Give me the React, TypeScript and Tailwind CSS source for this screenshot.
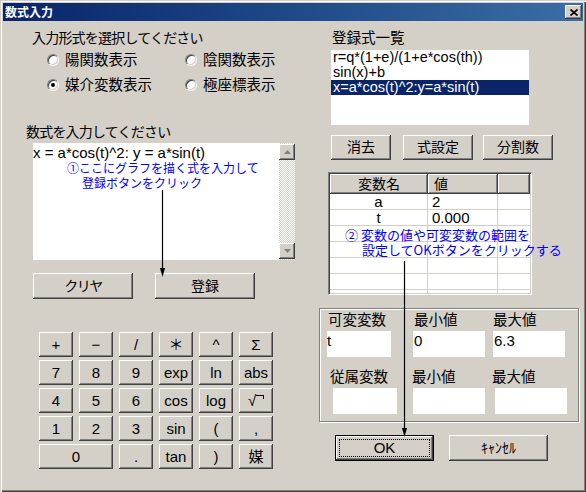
import type { ReactNode } from "react";

const RAISED =
  "bg-[#d4d0c8] shadow-[inset_-1px_-1px_0_#404040,inset_1px_1px_0_#ffffff,inset_-2px_-2px_0_#808080,inset_2px_2px_0_#d4d0c8]";

function Btn({ children, className = "" }: { children: ReactNode; className?: string }) {
  return (
    <div className={`flex items-center justify-center shrink-0 ${RAISED} ${className}`}>
      {children}
    </div>
  );
}

function Radio({ label, checked = false }: { label: string; checked?: boolean }) {
  return (
    <div className="flex items-center">
      <div className="w-[12px] h-[12px] rounded-full border border-t-[#808080] border-l-[#808080] border-r-white border-b-white">
        <div className="w-full h-full rounded-full bg-white shadow-[inset_1px_1px_0_#404040,inset_-1px_-1px_0_#d4d0c8] flex items-center justify-center">
          {checked && <div className="w-[4px] h-[4px] rounded-full bg-black" />}
        </div>
      </div>
      <span className="ml-[6px] text-[14.5px] leading-[16px]">{label}</span>
    </div>
  );
}

const KEYS: { k: ReactNode; wide?: boolean; cls?: string }[] = [
  { k: "+" }, { k: "−" }, { k: "/" }, { k: "＊", cls: "text-[12px]" }, { k: "^" }, { k: "Σ" },
  { k: "7" }, { k: "8" }, { k: "9" }, { k: "exp" }, { k: "ln" }, { k: "abs" },
  { k: "4" }, { k: "5" }, { k: "6" }, { k: "cos" }, { k: "log" },
  {
    k: (
      <span className="flex items-start">
        <span>√</span>
        <span className="mt-[2px] w-[8px] h-[4px] border-t border-r border-black" />
      </span>
    ),
  },
  { k: "1" }, { k: "2" }, { k: "3" }, { k: "sin" }, { k: "(" }, { k: "," },
  { k: "0", wide: true }, { k: "." }, { k: "tan" }, { k: ")" }, { k: "媒" },
];

function Calculator() {
  return (
    <div className="ml-[36px] mt-[33px] grid grid-cols-[repeat(6,34px)] auto-rows-[25px] gap-x-[6px] gap-y-[3px]">
      {KEYS.map((key, i) => (
        <Btn key={i} className={`text-[15px] leading-none ${key.wide ? "col-span-2" : ""} ${key.cls ?? ""}`}>
          {key.k}
        </Btn>
      ))}
    </div>
  );
}

function LeftPane() {
  return (
    <div className="w-[297px] flex flex-col">
      <div className="mt-[9px] ml-[29px] text-[14px] leading-[16px] tracking-[-0.8px]">
        入力形式を選択してください
      </div>
      <div className="mt-[1px] ml-[44px] grid grid-cols-[138px_auto] auto-rows-[25px]">
        <Radio label="陽関数表示" />
        <Radio label="陰関数表示" />
        <Radio label="媒介変数表示" checked />
        <Radio label="極座標表示" />
      </div>
      <div className="mt-[27px] ml-[23px] text-[14px] leading-[16px] tracking-[-0.8px]">
        数式を入力してください
      </div>

      {/* 入力欄 + スクロールバー */}
      <div className="mt-[3px] ml-[30px] w-[262px] h-[117px] flex bg-white">
        <div className="flex-1 pt-[2px] text-[15px] leading-[16px] whitespace-pre">
          x = a*cos(t)^2: y = a*sin(t)
        </div>
        <div className="w-[16px] flex flex-col pt-[1px] pb-[1px] bg-[image:repeating-conic-gradient(#d4d0c8_0_25%,#ffffff_0_50%)] bg-[length:2px_2px]">
          <Btn className="w-[16px] h-[16px]">
            <svg width="7" height="4" viewBox="0 0 7 4">
              <polygon points="3.5,0 7,4 0,4" fill="#808080" />
            </svg>
          </Btn>
          <div className="flex-1" />
          <Btn className="w-[16px] h-[16px]">
            <svg width="7" height="4" viewBox="0 0 7 4">
              <polygon points="0,0 7,0 3.5,4" fill="#808080" />
            </svg>
          </Btn>
        </div>
      </div>

      <div className="mt-[13px] ml-[30px] flex gap-[22px]">
        <Btn className="w-[100px] h-[26px] text-[14px] tracking-[-1.5px]">クリヤ</Btn>
        <Btn className="w-[100px] h-[26px] text-[14px]">登録</Btn>
      </div>

      <Calculator />
    </div>
  );
}

const FORMULAS = ["r=q*(1+e)/(1+e*cos(th))", "sin(x)+b", "x=a*cos(t)^2:y=a*sin(t)"];

function VarTable() {
  const rows = [
    ["a", "2"],
    ["t", "0.000"],
    ["", ""],
    ["", ""],
    ["", ""],
    ["", ""],
    ["", ""],
  ];
  return (
    <div className="mt-[12px] ml-[28px] w-[204px] h-[123px] border border-t-[#808080] border-l-[#808080] border-r-white border-b-white shadow-[inset_1px_1px_0_#404040,inset_-1px_-1px_0_#d4d0c8] p-[1px] bg-white overflow-hidden">
      <div className="flex h-[20px] text-[14px] leading-none">
        <div className={`w-[98px] ${RAISED} flex items-center justify-center`}>変数名</div>
        <div className={`w-[70px] ${RAISED} flex items-center pl-[6px]`}>値</div>
        <div className={`flex-1 ${RAISED}`} />
      </div>
      {rows.map(([n, v], i) => (
        <div key={i} className="flex h-[16px] border-b border-[#d4d0c8] text-[15px] leading-[15px]">
          <div className="w-[98px] border-r border-[#d4d0c8] text-center">{n}</div>
          <div className="w-[70px] border-r border-[#d4d0c8] pl-[4px]">{v}</div>
          <div className="flex-1" />
        </div>
      ))}
    </div>
  );
}

function Field({ value = "", className = "" }: { value?: string; className?: string }) {
  return <div className={`h-[26px] bg-white text-[15px] leading-[16px] pt-[2px] shrink-0 ${className}`}>{value}</div>;
}

function RangeBox() {
  return (
    <div className="mt-[13px] ml-[19px] w-[260px] h-[114px] border border-[#808080] shadow-[inset_1px_1px_0_#ffffff,1px_1px_0_#ffffff] flex flex-col text-[14.5px] leading-[16px]">
      <div className="mt-[3px] flex">
        <span className="ml-[8px] w-[86px]">可変変数</span>
        <span className="w-[79px]">最小値</span>
        <span>最大値</span>
      </div>
      <div className="mt-[3px] flex">
        <Field value="t" className="ml-[7px] w-[64px]" />
        <Field value="0" className="ml-[22px] w-[72px] pl-[1px]" />
        <Field value="6.3" className="ml-[8px] w-[72px] pl-[1px]" />
      </div>
      <div className="mt-[12px] flex">
        <span className="ml-[10px] w-[82px]">従属変数</span>
        <span className="w-[80px]">最小値</span>
        <span>最大値</span>
      </div>
      <div className="mt-[3px] flex">
        <Field className="ml-[13px] w-[64px]" />
        <Field className="ml-[16px] w-[72px]" />
        <Field className="ml-[10px] w-[72px]" />
      </div>
    </div>
  );
}

function RightPane() {
  return (
    <div className="flex-1 flex flex-col">
      <div className="mt-[9px] ml-[32px] text-[14.5px] leading-[16px]">登録式一覧</div>
      <div className="mt-[4px] ml-[31px] w-[198px] h-[75px] bg-white text-[14.5px] leading-[15px]">
        {FORMULAS.map((f, i) => (
          <div key={f} className={`pl-[2px] h-[15px] ${i === 2 ? "bg-[#0a246a] text-white" : ""}`}>
            {f}
          </div>
        ))}
      </div>
      <div className="mt-[10px] ml-[31px] flex text-[14px]">
        <Btn className="w-[60px] h-[25px]">消去</Btn>
        <Btn className="ml-[12px] w-[70px] h-[25px]">式設定</Btn>
        <Btn className="ml-[10px] w-[70px] h-[25px]">分割数</Btn>
      </div>
      <VarTable />
      <RangeBox />
      <div className="mt-[13px] ml-[35px] flex">
        <div className="w-[99px] h-[26px] border border-black">
          <div className={`relative w-full h-full flex items-center justify-center text-[15px] ${RAISED}`}>
            <div className="absolute inset-[3px] border border-dotted border-black" />
            OK
          </div>
        </div>
        <Btn className="ml-[15px] w-[99px] h-[26px] text-[14px]">ｷｬﾝｾﾙ</Btn>
      </div>
    </div>
  );
}

export default function App() {
  return (
    <div className="relative w-[586px] h-[492px] overflow-hidden bg-[#d4d0c8] text-black font-['Liberation_Sans','Noto_Sans_CJK_JP',sans-serif] flex flex-col p-[3px] shadow-[inset_1px_1px_0_#d4d0c8,inset_2px_2px_0_#ffffff,inset_-1px_-1px_0_#404040,inset_-2px_-2px_0_#808080]">
      {/* タイトルバー */}
      <div className="h-[18px] shrink-0 flex items-center bg-linear-to-r from-[#0a246a] to-[#3a6ea5] pl-[2px]">
        <span className="flex-1 text-white font-bold text-[12px] leading-none font-['Noto_Sans_CJK_JP',sans-serif]">
          数式入力
        </span>
        <Btn className="w-[17px] h-[14px] mr-[1px]">
          <svg width="8" height="7" viewBox="0 0 8 7">
            <path d="M0.5 0.5 L7.5 6.5 M7.5 0.5 L0.5 6.5" stroke="#000" strokeWidth="1.7" />
          </svg>
        </Btn>
      </div>

      <div className="flex flex-1">
        <LeftPane />
        <RightPane />
      </div>

      {/* 注釈 */}
      <div className="absolute left-[67px] top-[160px] text-[12px] leading-[15px] text-[#0000ff] font-['Noto_Sans_CJK_JP',sans-serif]">
        ①ここにグラフを描く式を入力して
        <div className="pl-[15px]">登録ボタンをクリック</div>
      </div>
      <div className="absolute left-[345px] top-[227px] text-[13px] leading-[15px] text-[#0000ff] whitespace-pre font-['Noto_Sans_CJK_JP',sans-serif]">
        ② 変数の値や可変変数の範囲を
        <div className="pl-[17px]">設定してOKボタンをクリックする</div>
      </div>

      {/* 矢印 */}
      <svg className="absolute left-[159px] top-[190px]" width="7" height="88" viewBox="0 0 7 88">
        <line x1="3.5" y1="0" x2="3.5" y2="80" stroke="#000" strokeWidth="1.2" />
        <polygon points="1,78 6,78 3.5,87" fill="#000" />
      </svg>
      <svg className="absolute left-[401px] top-[261px]" width="7" height="177" viewBox="0 0 7 177">
        <line x1="3.5" y1="0" x2="3.5" y2="170" stroke="#000" strokeWidth="1.2" />
        <polygon points="1,167 6,167 3.5,176" fill="#000" />
      </svg>
    </div>
  );
}
